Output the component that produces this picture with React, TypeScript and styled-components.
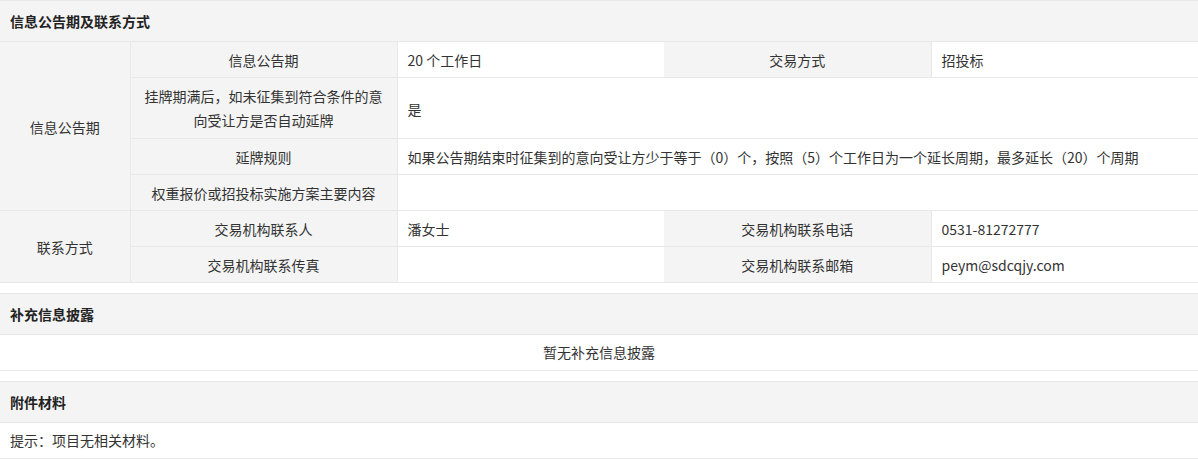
import React from 'react';
import styled, { createGlobalStyle } from 'styled-components';

const GlobalStyle = createGlobalStyle`
  body {
    margin: 0;
    background: #fff;
    font-family: "Noto Sans CJK SC", "Noto Sans", sans-serif;
    font-size: 14px;
    color: #333;
  }
`;

const App = () => {
  return (
    <S.Page>
      <GlobalStyle />
      <S.Section>
        <S.Title>信息公告期及联系方式</S.Title>
        <S.Table>
          <colgroup>
            <col style={{ width: 130 }} />
            <col style={{ width: 267 }} />
            <col style={{ width: 267 }} />
            <col style={{ width: 267 }} />
            <col style={{ width: 267 }} />
          </colgroup>
          <tbody>
            <tr>
              <S.Label rowSpan={4}>信息公告期</S.Label>
              <S.Label>信息公告期</S.Label>
              <S.Value>20 个工作日</S.Value>
              <S.Label>交易方式</S.Label>
              <S.Value>招投标</S.Value>
            </tr>
            <tr>
              <S.Label $tall>挂牌期满后，如未征集到符合条件的意向受让方是否自动延牌</S.Label>
              <S.Value colSpan={3}>是</S.Value>
            </tr>
            <tr>
              <S.Label>延牌规则</S.Label>
              <S.Value colSpan={3}>
                如果公告期结束时征集到的意向受让方少于等于（0）个，按照（5）个工作日为一个延长周期，最多延长（20）个周期
              </S.Value>
            </tr>
            <tr>
              <S.Label>权重报价或招投标实施方案主要内容</S.Label>
              <S.Value colSpan={3}></S.Value>
            </tr>
            <tr>
              <S.Label rowSpan={2}>联系方式</S.Label>
              <S.Label>交易机构联系人</S.Label>
              <S.Value>潘女士</S.Value>
              <S.Label>交易机构联系电话</S.Label>
              <S.Value>0531-81272777</S.Value>
            </tr>
            <tr>
              <S.Label>交易机构联系传真</S.Label>
              <S.Value></S.Value>
              <S.Label>交易机构联系邮箱</S.Label>
              <S.Value>peym@sdcqjy.com</S.Value>
            </tr>
          </tbody>
        </S.Table>
      </S.Section>

      <S.Section>
        <S.Title>补充信息披露</S.Title>
        <S.Row $center>暂无补充信息披露</S.Row>
      </S.Section>

      <S.Section>
        <S.Title>附件材料</S.Title>
        <S.Row>提示：项目无相关材料。</S.Row>
      </S.Section>
    </S.Page>
  );
};

const S = {
  Page: styled.div`
    width: 1198px;
  `,
  Section: styled.div`
    margin-bottom: 10px;
  `,
  Title: styled.div`
    height: 40px;
    line-height: 40px;
    padding-left: 10px;
    background: #f4f4f4;
    border-top: 1px solid #e8e8e8;
    font-weight: 700;
    color: #222;
  `,
  Table: styled.table`
    width: 100%;
    table-layout: fixed;
    border-collapse: collapse;
    border-top: 1px solid #e8e8e8;
    border-bottom: 1px solid #e8e8e8;
  `,
  Label: styled.td<{ $tall?: boolean }>`
    background: #f4f4f4;
    border: 1px solid #e8e8e8;
    border-left: none;
    text-align: center;
    vertical-align: middle;
    padding: ${({ $tall }) => ($tall ? '6px 10px 6px' : '6px 10px 5px')};
    line-height: 24px;
  `,
  Value: styled.td`
    background: #fff;
    border: 1px solid #e8e8e8;
    border-right: none;
    text-align: left;
    vertical-align: middle;
    padding: 6px 10px 5px;
    line-height: 24px;
  `,
  Row: styled.div<{ $center?: boolean }>`
    height: 35px;
    line-height: 35px;
    padding: 0 10px;
    border-top: 1px solid #e8e8e8;
    border-bottom: 1px solid #e8e8e8;
    text-align: ${({ $center }) => ($center ? 'center' : 'left')};
  `,
};

export default App;
